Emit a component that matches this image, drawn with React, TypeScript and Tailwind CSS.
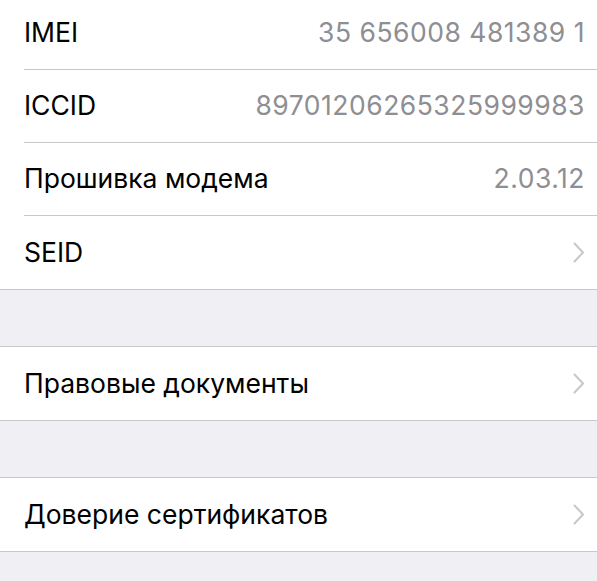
import React from 'react';

type Row = { label: string; value?: string; chevron?: boolean };

function Chevron() {
  return (
    <svg width="12" height="21" viewBox="0 0 12 21" fill="none" className="shrink-0">
      <path d="M1.5 1.5 L10 10.5 L1.5 19.5" stroke="#c7c7cc" strokeWidth="2" strokeLinecap="round" strokeLinejoin="round" />
    </svg>
  );
}

function Cell({ row, last }: { row: Row; last?: boolean }) {
  return (
    <div className="pl-6">
      <div className={`flex h-[73px] items-center justify-between pr-[12px] ${last ? 'h-[72px]' : 'border-b border-[#c8c7cc]'}`}>
        <span className="text-[26.5px] text-black">{row.label}</span>
        {row.value && <span className="text-[26.5px] text-[#8e8e93] tracking-[0.5px]">{row.value}</span>}
        {row.chevron && <span><Chevron /></span>}
      </div>
    </div>
  );
}

function Group({ rows, first }: { rows: Row[]; first?: boolean }) {
  return (
    <div className={`bg-white border-b border-[#c8c7cc] ${first ? '-mt-[3px]' : 'border-t'}`}>
      {rows.map((r, i) => (
        <Cell key={r.label} row={r} last={i === rows.length - 1} />
      ))}
    </div>
  );
}

export default function App() {
  return (
    <div className="h-[581px] overflow-hidden bg-[#efeff4] font-['Inter','Noto_Sans',sans-serif]">
      <Group
        first
        rows={[
          { label: 'IMEI', value: '35 656008 481389 1' },
          { label: 'ICCID', value: '89701206265325999983' },
          { label: 'Прошивка модема', value: '2.03.12' },
          { label: 'SEID', chevron: true },
        ]}
      />
      <div className="h-[56px]" />
      <Group rows={[{ label: 'Правовые документы', chevron: true }]} />
      <div className="h-[56px]" />
      <Group rows={[{ label: 'Доверие сертификатов', chevron: true }]} />
    </div>
  );
}
